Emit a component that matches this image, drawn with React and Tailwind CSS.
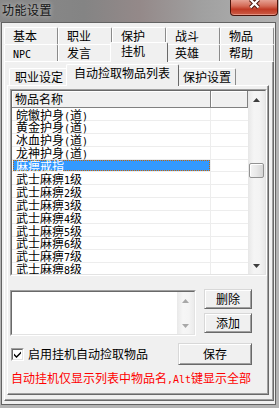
import React from 'react';

const rows = [
  '皖徽护身(道)',
  '黄金护身(道)',
  '冰血护身(道)',
  '龙神护身(道)',
  '麻痹戒指',
  '武士麻痹1级',
  '武士麻痹2级',
  '武士麻痹3级',
  '武士麻痹4级',
  '武士麻痹5级',
  '武士麻痹6级',
  '武士麻痹7级',
  '武士麻痹8级',
];

// half-width ascii runs get a 6px mono face, like the bitmap font
function Txt({ s }) {
  return s.split(/([ -~]+)/).map((p, i) =>
    i % 2 ? (
      <span key={i} className="font-['DejaVu_Sans_Mono',monospace] text-[10px]">
        {p}
      </span>
    ) : (
      p
    )
  );
}

function OuterTab({ label, active }) {
  if (active) {
    return (
      <div className="relative z-10 -mx-[2px] -mb-[1px] -mt-[2px] h-[20px] w-[58px] shrink-0 rounded-t-[2px] border-l border-r border-t border-l-white border-r-[#696969] border-t-white bg-[#f0f0f0] pl-[10px] pt-[2px]">
        <Txt s={label} />
      </div>
    );
  }
  return (
    <div className="h-[17px] w-[54px] shrink-0 rounded-t-[2px] border-l border-r border-t border-l-white border-r-[#8a8a8a] border-t-white bg-[#f0f0f0] pl-[8px] pt-[2px]">
      <Txt s={label} />
    </div>
  );
}

function InnerTab({ label, active, w }) {
  if (active) {
    return (
      <div
        className="relative z-10 -mx-[2px] -mb-[1px] h-[22px] shrink-0 rounded-t-[2px] border-l border-r border-t border-l-white border-r-[#696969] border-t-white bg-[#f0f0f0] pl-[7px] pt-[2px]"
        style={{ width: w + 4 }}
      >
        {label}
      </div>
    );
  }
  return (
    <div
      className="h-[17px] shrink-0 rounded-t-[2px] border-l border-r border-t border-l-white border-r-[#8a8a8a] border-t-white bg-[#f0f0f0] pl-[5px] pt-[2px]"
      style={{ width: w }}
    >
      {label}
    </div>
  );
}

function Btn({ children, className }) {
  return (
    <div
      className={
        'flex items-center justify-center border border-b-[#696969] border-l-[#d8d8d8] border-r-[#696969] border-t-[#d8d8d8] bg-[#f0f0f0] shadow-[inset_1px_1px_#fff,inset_-1px_-1px_#a0a0a0] ' +
        className
      }
    >
      {children}
    </div>
  );
}

function Arrow({ up, color }) {
  return (
    <svg width="7" height="4" viewBox="0 0 7 4">
      <path d={up ? 'M3.5 0L7 4H0Z' : 'M0 0H7L3.5 4Z'} fill={color} />
    </svg>
  );
}

export default function App() {
  return (
    <div className="flex h-[408px] w-[279px] flex-col overflow-hidden bg-[#b4b4b4] font-['Noto_Sans_CJK_SC','Liberation_Sans',sans-serif] text-[12px] leading-[12px] text-black">
      {/* Title bar */}
      <div className="flex h-[22px] shrink-0 items-start justify-between bg-[linear-gradient(to_right,#8a8a8a,#848484_30%,#948989_50%,#a0a0a0_72%,#b3b3b3)]">
        <div className="pl-[2px] pt-[3px] text-[12px] leading-[13px] tracking-[0.5px] text-[#151515] [text-shadow:0_0_5px_rgba(255,255,255,0.6)]">
          功能设置
        </div>
        <div className="mr-[1px] flex h-[16px] w-[48px] justify-center rounded-b-[4px] border border-t-0 border-[#4a140b] bg-[linear-gradient(#e6a193,#d46b57_40%,#c03a25_62%,#cc5d47)] shadow-[inset_0_-1px_rgba(255,200,190,0.5)]">
          <svg width="13" height="10" viewBox="0 0 13 10" className="-mt-[1px]">
            <path d="M2.5 0.5L10.5 8.5M10.5 0.5L2.5 8.5" stroke="#4a140b" strokeWidth="4.2" />
            <path d="M2.5 0.5L10.5 8.5M10.5 0.5L2.5 8.5" stroke="#fff" strokeWidth="2.2" />
          </svg>
        </div>
      </div>

      {/* Client area */}
      <div className="mb-[3px] ml-[1px] mr-[3px] flex flex-1 flex-col border border-[#636363] bg-[#f0f0f0] pb-[3px] pl-[2px] pr-[1px] pt-[4px]">
        <div className="flex">
          <OuterTab label="基本" />
          <OuterTab label="职业" />
          <OuterTab label="保护" />
          <OuterTab label="战斗" />
          <OuterTab label="物品" />
        </div>
        <div className="flex">
          <OuterTab label="NPC" />
          <OuterTab label="发言" />
          <OuterTab label="挂机" active />
          <OuterTab label="英雄" />
          <OuterTab label="帮助" />
        </div>

        {/* Outer tab panel */}
        <div className="flex flex-1 flex-col border border-b-[#696969] border-l-white border-r-[#696969] border-t-white pb-[5px] pl-[2px] pr-[4px] pt-[1px] shadow-[inset_-1px_-1px_#a0a0a0]">
          <div className="flex h-[22px] items-end pl-[2px]">
            <InnerTab label="职业设定" w={59} />
            <InnerTab label="自动捡取物品列表" w={109} active />
            <InnerTab label="保护设置" w={59} />
          </div>

          {/* Inner tab panel */}
          <div className="flex flex-1 flex-col border border-b-[#696969] border-l-white border-r-[#696969] border-t-white pl-[2px] pt-[3px] shadow-[inset_-1px_-1px_#a0a0a0]">
            {/* Item list */}
            <div className="h-[187px] w-[257px] border border-b-white border-l-[#a0a0a0] border-r-white border-t-[#a0a0a0]">
              <div className="flex h-full border border-b-[#e3e3e3] border-l-[#696969] border-r-[#e3e3e3] border-t-[#696969] bg-white">
                <div className="flex w-[236px] flex-col overflow-hidden">
                  <div className="flex h-[17px] shrink-0">
                    <div className="w-[199px] border-b border-r border-b-[#808080] border-r-[#808080] bg-[#f0f0f0] pl-[3px] pt-[2px] shadow-[inset_1px_1px_#fff]">
                      物品名称
                    </div>
                    <div className="w-[37px] border-b border-r border-b-[#808080] border-r-[#808080] bg-[#f0f0f0] shadow-[inset_1px_1px_#fff]" />
                  </div>
                  {rows.map((r, i) => (
                    <div key={r} className="flex h-[12.9px] shrink-0 border-b border-[#ededed] leading-[11px]">
                      {i === 4 ? (
                        <div className="w-[199px] border-r border-[#ededed] pl-[1px]">
                          <div className="h-full border border-dotted border-[#cc6600] bg-[#3399ff] pl-[2px] leading-[10px] text-white">
                            {r}
                          </div>
                        </div>
                      ) : (
                        <div className="w-[199px] border-r border-[#ededed] pl-[4px] pt-[0.5px]">
                          <Txt s={r} />
                        </div>
                      )}
                      <div className="w-[37px]" />
                    </div>
                  ))}
                </div>
                <div className="flex w-[17px] flex-col bg-[linear-gradient(to_right,#e7e7e7,#f5f5f5_35%,#f3f3f3_70%,#e9e9e9)]">
                  <div className="flex h-[17px] items-center justify-center">
                    <Arrow up color="#3d3d3d" />
                  </div>
                  <div className="flex-1 px-[1px] pt-[55px]">
                    <div className="h-[15px] rounded-[2px] border border-[#929292] bg-[linear-gradient(to_right,#f4f4f4,#e8e8e8_50%,#d5d5d5)] shadow-[inset_1px_1px_#fff]" />
                  </div>
                  <div className="flex h-[17px] items-center justify-center">
                    <Arrow color="#3d3d3d" />
                  </div>
                </div>
              </div>
            </div>

            {/* Edit box + buttons */}
            <div className="mt-[13px] flex w-[242px]">
              <div className="mt-[1px] h-[46px] w-[186px] border border-b-white border-l-[#a0a0a0] border-r-white border-t-[#a0a0a0]">
                <div className="flex h-full border border-b-[#e3e3e3] border-l-[#696969] border-r-[#e3e3e3] border-t-[#696969] bg-white">
                  <div className="flex-1" />
                  <div className="flex w-[17px] flex-col justify-between bg-[linear-gradient(to_right,#e9e9e9,#f6f6f6_35%,#f4f4f4_70%,#ebebeb)]">
                    <div className="flex h-[17px] items-center justify-center">
                      <Arrow up color="#a8a8a8" />
                    </div>
                    <div className="flex h-[17px] items-center justify-center">
                      <Arrow color="#a8a8a8" />
                    </div>
                  </div>
                </div>
              </div>
              <div className="ml-[8px] flex flex-col gap-[4px]">
                <Btn className="h-[20px] w-[48px]">删除</Btn>
                <Btn className="h-[20px] w-[48px]">添加</Btn>
              </div>
            </div>

            {/* Enable + save */}
            <div className="mt-[7px] flex w-[242px] items-center justify-between">
              <div className="ml-[1px] flex items-center gap-[4px]">
                <div className="h-[13px] w-[13px] border border-b-white border-l-[#a0a0a0] border-r-white border-t-[#a0a0a0]">
                  <div className="flex h-full items-center justify-center border border-b-[#e3e3e3] border-l-[#696969] border-r-[#e3e3e3] border-t-[#696969] bg-white">
                    <svg width="7" height="7" viewBox="0 0 7 7">
                      <path d="M0 2.5L2.5 5L7 0.5V2.5L2.5 7L0 4.5Z" fill="#000" />
                    </svg>
                  </div>
                </div>
                <span>启用挂机自动捡取物品</span>
              </div>
              <Btn className="h-[22px] w-[74px]">保存</Btn>
            </div>

            <div className="ml-[1px] mt-[7px] text-[#ff0000]">
              <Txt s="自动挂机仅显示列表中物品名,Alt键显示全部" />
            </div>
          </div>
        </div>
      </div>
    </div>
  );
}
